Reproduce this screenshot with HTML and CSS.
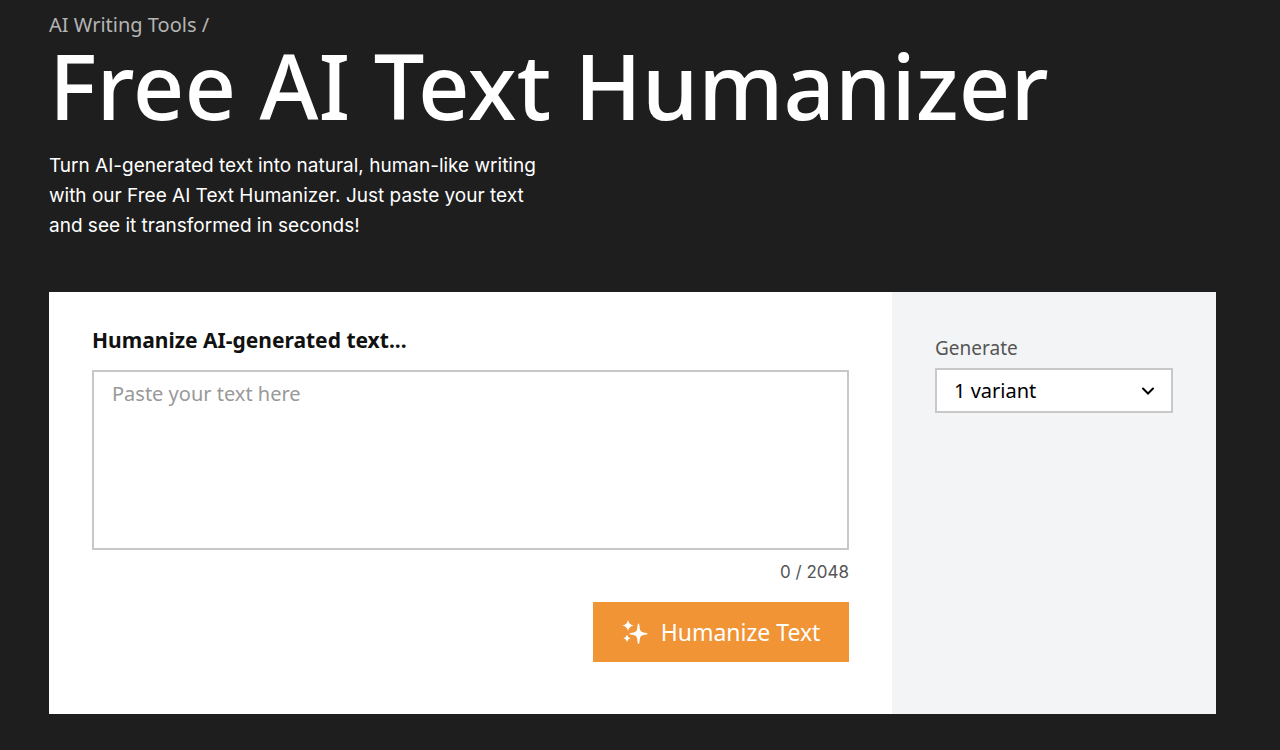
FILE: index.html
```html
<!DOCTYPE html>
<html lang="en">
<head>
<meta charset="utf-8">
<meta name="viewport" content="width=device-width, initial-scale=1">
<title>Free AI Text Humanizer</title>
<link rel="stylesheet" href="styles.css">
</head>
<body>
<main class="page">
  <nav class="breadcrumb"><a href="#">AI Writing Tools</a> /</nav>
  <h1 class="title">Free AI Text Humanizer</h1>
  <p class="intro">Turn AI-generated text into natural, human-like writing<br>with our Free AI Text Humanizer. Just paste your text<br>and see it transformed in seconds!</p>
  <form class="tool">
    <section class="editor">
      <label class="editor-label" for="source">Humanize AI-generated text...</label>
      <textarea class="editor-input" id="source" placeholder="Paste your text here"></textarea>
      <div class="counter">0 / 2048</div>
      <button class="submit" type="button">
        <svg class="sparkles" viewBox="0 0 26 26" aria-hidden="true"><path d="M16.500 4.500C17.300 4.500 17.400 6 17.800 9.500Q18.200 13 21.500 13.400C24 13.700 25.500 13.900 25.500 14.700S24 15.700 21.500 16Q18.200 16.400 17.800 20C17.400 23.500 17.300 25 16.500 25S15.600 23.500 15.200 20Q14.800 16.400 11.500 16C9 15.700 7.500 15.500 7.500 14.700S9 13.700 11.500 13.400Q14.800 13 15.200 9.500C15.600 6 15.700 4.500 16.500 4.500ZM6 1Q6.800 5.500 11.500 6.500Q6.800 7.500 6 12Q5.200 7.500 .5 6.500Q5.200 5.500 6 1ZM5 15.500Q5.600 18.500 8.500 19.200Q5.600 20 5 23Q4.400 20 1.500 19.200Q4.400 18.500 5 15.500Z"/></svg>
        <span>Humanize Text</span>
      </button>
    </section>
    <aside class="options">
      <label class="options-label" for="count">Generate</label>
      <div class="select-wrap">
        <select class="select" id="count"><option>1 variant</option></select>
        <svg class="chevron" viewBox="0 0 12 8" aria-hidden="true"><path d="M1 1.500L6 6.500L11 1.500"/></svg>
      </div>
    </aside>
  </form>
</main>
</body>
</html>
```
FILE: styles.css
```css
* { box-sizing: border-box; }
body { margin: 0; background: #1e1e1e; color: #fff; font-family: Inter, sans-serif; }
.page { padding: 12px 64px 36px 49px; }
.breadcrumb { font: 20px/26px "Noto Sans", sans-serif; color: #b4b4b4; }
.breadcrumb a { color: inherit; text-decoration: none; }
.title { margin: 0; font: 500 90px/94px "Noto Sans", sans-serif; white-space: nowrap; }
.intro { margin: 19px 0 0; font-size: 19px; line-height: 30px; }
.tool { display: grid; grid-template-columns: 843fr 324fr; margin-top: 51px; background: #fff; }
.editor { display: flex; flex-direction: column; padding: 34px 43px 52px; }
.editor-label { font: 700 21px/28px "Noto Sans", sans-serif; color: #111; }
.editor-input { height: 180px; margin-top: 16px; padding: 9px 18px; border: 2px solid #c8c8c8; border-radius: 0; resize: none; outline: none; font: 20px/26px "Noto Sans", sans-serif; color: #111; }
.editor-input::placeholder { color: #999; opacity: 1; }
.counter { margin-top: 10px; text-align: right; font-size: 17px; line-height: 24px; color: #555; }
.submit { display: flex; align-items: center; justify-content: center; gap: 13px; align-self: flex-end; width: 256px; height: 60px; margin-top: 18px; padding: 0; border: 0; background: #f09436; color: #fff; font: 23px/30px "Noto Sans", sans-serif; }
.sparkles { width: 26px; height: 26px; fill: currentColor; }
.options { padding: 43px; background: #f3f4f6; }
.options-label { display: block; font: 19px/26px "Noto Sans", sans-serif; color: #555; }
.select-wrap { position: relative; margin-top: 7px; }
.select { width: 100%; height: 45px; padding: 0 17px; border: 2px solid #c8c8c8; border-radius: 0; background: #fff; color: #000; appearance: none; font: 20px/26px "Noto Sans", sans-serif; }
.chevron { position: absolute; right: 19px; top: 19px; width: 12px; height: 8px; fill: none; stroke: #000; stroke-width: 2; stroke-linecap: round; pointer-events: none; }
```
